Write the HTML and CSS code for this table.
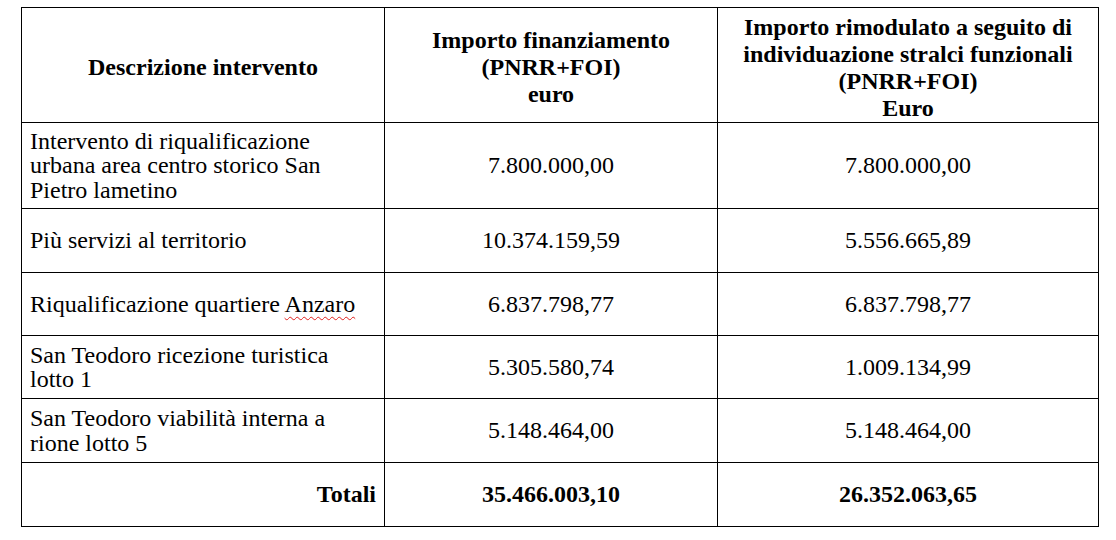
FILE: index.html
```html
<!DOCTYPE html>
<html lang="it">
<head>
<meta charset="utf-8">
<title>Interventi PNRR</title>
<link rel="stylesheet" href="styles.css">
</head>
<body>
<table class="grid">
  <colgroup>
    <col class="col-desc">
    <col class="col-fin">
    <col class="col-rim">
  </colgroup>
  <thead>
    <tr class="row-head">
      <th class="h-desc">Descrizione intervento</th>
      <th>Importo finanziamento<br>(PNRR+FOI)<br>euro</th>
      <th>Importo rimodulato a seguito di<br>individuazione stralci funzionali<br>(PNRR+FOI)<br>Euro</th>
    </tr>
  </thead>
  <tbody>
    <tr class="row-tall">
      <td class="desc">Intervento di riqualificazione<br>urbana area centro storico San<br>Pietro lametino</td>
      <td class="num">7.800.000,00</td>
      <td class="num">7.800.000,00</td>
    </tr>
    <tr class="row-std">
      <td class="desc">Più servizi al territorio</td>
      <td class="num">10.374.159,59</td>
      <td class="num">5.556.665,89</td>
    </tr>
    <tr class="row-sm">
      <td class="desc">Riqualificazione quartiere <span class="spell">Anzaro</span></td>
      <td class="num">6.837.798,77</td>
      <td class="num">6.837.798,77</td>
    </tr>
    <tr class="row-sm">
      <td class="desc">San Teodoro ricezione turistica<br>lotto 1</td>
      <td class="num">5.305.580,74</td>
      <td class="num">1.009.134,99</td>
    </tr>
    <tr class="row-std">
      <td class="desc">San Teodoro viabilità interna a<br>rione lotto 5</td>
      <td class="num">5.148.464,00</td>
      <td class="num">5.148.464,00</td>
    </tr>
    <tr class="row-std row-total">
      <td class="total-label">Totali</td>
      <td class="num total">35.466.003,10</td>
      <td class="num total">26.352.063,65</td>
    </tr>
  </tbody>
</table>
</body>
</html>
```

FILE: styles.css
```css
html, body {
  margin: 0;
  padding: 0;
  background: #fff;
}

body {
  padding: 7px 0 0 21px;
  font-family: Tinos, Times, serif;
  color: #000;
}

.grid {
  border-collapse: collapse;
  table-layout: fixed;
  width: 1077px;
  font-family: Tinos, Times, serif;
}

.col-desc { width: 363px; }
.col-fin { width: 333px; }
.col-rim { width: 381px; }

.grid th,
.grid td {
  font-family: Tinos, Times, serif;
  border: 1px solid #000;
  padding: 0 8px;
  vertical-align: middle;
  color: #000;
}

.grid th {
  font-weight: bold;
  font-size: 24px;
  line-height: 27px;
  text-align: center;
  padding-top: 5px;
}

.row-head { height: 115px; }
.row-tall { height: 86px; }
.row-std { height: 64px; }
.row-sm { height: 63px; }

.grid td {
  font-size: 24px;
  line-height: 24.5px;
}

.desc {
  text-align: left;
}

.num {
  text-align: center;
}

.total-label {
  text-align: right;
  font-weight: bold;
}

.total {
  font-weight: bold;
}

.spell {
  text-decoration: underline wavy #e0201c;
  text-decoration-thickness: 1px;
  text-underline-offset: 4px;
}
```
